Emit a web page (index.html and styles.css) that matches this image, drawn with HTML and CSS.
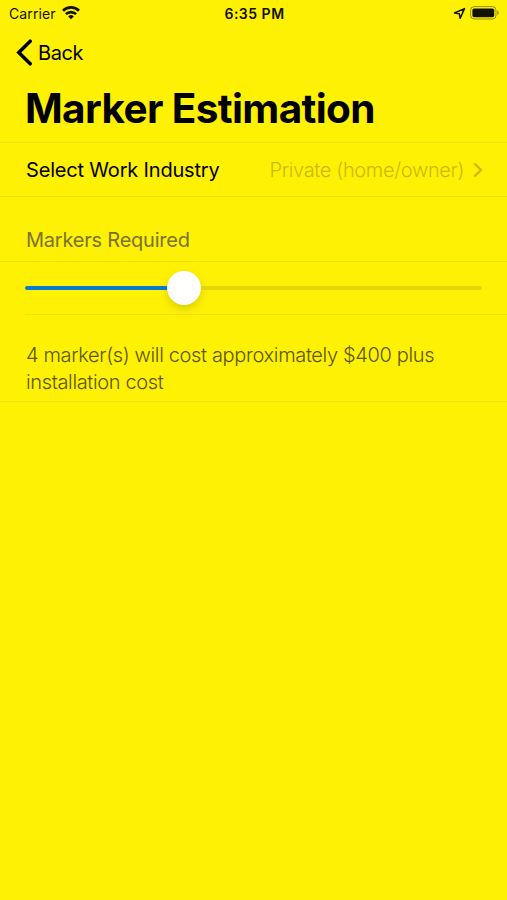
FILE: index.html
```
<!DOCTYPE html>
<html lang="en">
<head>
  <meta charset="UTF-8">
  <meta name="viewport" content="width=device-width, initial-scale=1.0">
  <title>Marker Estimation</title>
  <link rel="stylesheet" href="styles.css">
</head>
<body>

  <!-- Status bar -->
  <div class="status-bar">
    <div class="status-left">
      <span class="carrier">Carrier</span>
      <svg class="wifi" width="18" height="14" viewBox="0 0 18 14">
        <g fill="none" stroke="#111100" stroke-width="2.6">
          <path d="M1 4.7a11.4 11.4 0 0 1 16 0"/>
          <path d="M3.900 8.200a7.200 7.200 0 0 1 10.200 0"/>
        </g>
        <path d="M6.200 10.400a4 4 0 0 1 5.600 0L9 13.200z" fill="#111100"/>
      </svg>
    </div>
    <span class="time">6:35 PM</span>
    <div class="status-right">
      <svg width="13" height="13" viewBox="0 0 13 13">
        <path d="M1.500 6 11.500 1.600 7.200 11.300 6.300 6.700z" fill="none" stroke="#111100" stroke-width="1.500" stroke-linejoin="round"/>
      </svg>
      <svg width="30" height="14" viewBox="0 0 30 14">
        <rect x=".6" y=".6" width="25.4" height="12.4" rx="3.6" fill="none" stroke="#000" stroke-opacity=".42" stroke-width="1"/>
        <rect x="2.4" y="2.4" width="21.8" height="8.8" rx="1.8" fill="#111100"/>
        <path d="M27.3 4.6c2 .7 2 3.8 0 4.5z" fill="#000" fill-opacity=".42"/>
      </svg>
    </div>
  </div>

  <div class="nav-bar">
    <svg width="17" height="27" viewBox="0 0 17 27">
      <path d="M14.200 2.200 2.800 13.500l11.400 11.300" fill="none" stroke="#000" stroke-width="3.500" stroke-linecap="round"/>
    </svg>
    <span class="back">Back</span>
  </div>

  <h1>Marker Estimation</h1>

  <div class="row industry">
    <span class="label">Select Work Industry</span>
    <span class="value">Private (home/owner)</span>
    <svg width="10" height="16" viewBox="0 0 10 16">
      <path d="M1.300 1.500 8 8l-6.700 6.500" fill="none" stroke="#c8bb08" stroke-width="2.400"/>
    </svg>
  </div>

  <h2>Markers Required</h2>

  <div class="row slider-row">
    <div class="slider">
      <div class="fill"></div>
      <div class="thumb"></div>
      <div class="track"></div>
    </div>
  </div>

  <div class="row summary">
    <p>4 marker(s) will cost approximately $400 plus<br>installation cost</p>
  </div>

</body>
</html>
```

FILE: styles.css
```
* {
  box-sizing: border-box;
}

body {
  margin: 0;
  min-height: 100vh;
  background: #fff104;
  color: #000;
  font-family: Inter, "Liberation Sans", sans-serif;
  font-size: 20px;
}

svg {
  display: block;
  flex: none;
}

/* Status bar */
.status-bar {
  height: 27px;
  display: grid;
  grid-template-columns: 1fr auto 1fr;
  align-items: center;
  padding: 0 7px 0 9px;
  color: #111100;
}

.status-left,
.status-right {
  display: flex;
  align-items: center;
  gap: 6px;
}

.wifi {
  margin-top: -2px;
}

.status-right {
  justify-content: flex-end;
  gap: 4px;
}

.status-right svg {
  margin-top: -1px;
}

.carrier {
  font-size: 14px;
  letter-spacing: 0.1px;
}

.time {
  font-size: 14px;
  font-weight: 600;
  letter-spacing: 0.5px;
}

.nav-bar {
  height: 51px;
  display: flex;
  align-items: center;
  gap: 5px;
  padding-left: 16px;
}

.back {
  letter-spacing: -0.4px;
}

h1 {
  height: 64px;
  margin: 0;
  padding-left: 25px;
  font-size: 40.5px;
  line-height: 62px;
  font-weight: 700;
  letter-spacing: -0.63px;
  white-space: nowrap;
}

.row {
  border-bottom: 1px solid #f0e206;
}

.industry {
  height: 55px;
  display: flex;
  align-items: center;
  padding: 0 24px 0 26px;
  border-top: 1px solid #f0e206;
  white-space: nowrap;
}

.label {
  letter-spacing: -0.18px;
}

.value {
  margin-left: auto;
  margin-right: 9px;
  color: #c8bb08;
  font-weight: 300;
  letter-spacing: -0.35px;
}

h2 {
  height: 65px;
  margin: 0;
  padding: 29px 0 0 26px;
  border-bottom: 1px solid #f0e206;
  color: #79732f;
  font-size: 20px;
  line-height: 28px;
  font-weight: 400;
  letter-spacing: -0.22px;
}

/* Slider */
.slider-row {
  height: 53px;
  margin-left: 25px;
  padding-right: 25px;
}

.slider {
  height: 52px;
  display: flex;
  align-items: center;
}

.fill {
  width: 142px;
  height: 4px;
  border-radius: 2px 0 0 2px;
  background: #087bd0;
}

.thumb {
  width: 34px;
  height: 34px;
  border-radius: 50%;
  background: #fff;
  box-shadow: 0 4px 8px rgba(0, 0, 0, 0.15);
}

.track {
  flex: 1;
  height: 4px;
  border-radius: 0 2px 2px 0;
  background: #e2d509;
}

.summary {
  height: 87px;
  padding: 27px 25px 0 26px;
}

.summary p {
  margin: 0;
  color: #5b5606;
  font-weight: 300;
  line-height: 27px;
  letter-spacing: -0.35px;
  white-space: nowrap;
}
```
